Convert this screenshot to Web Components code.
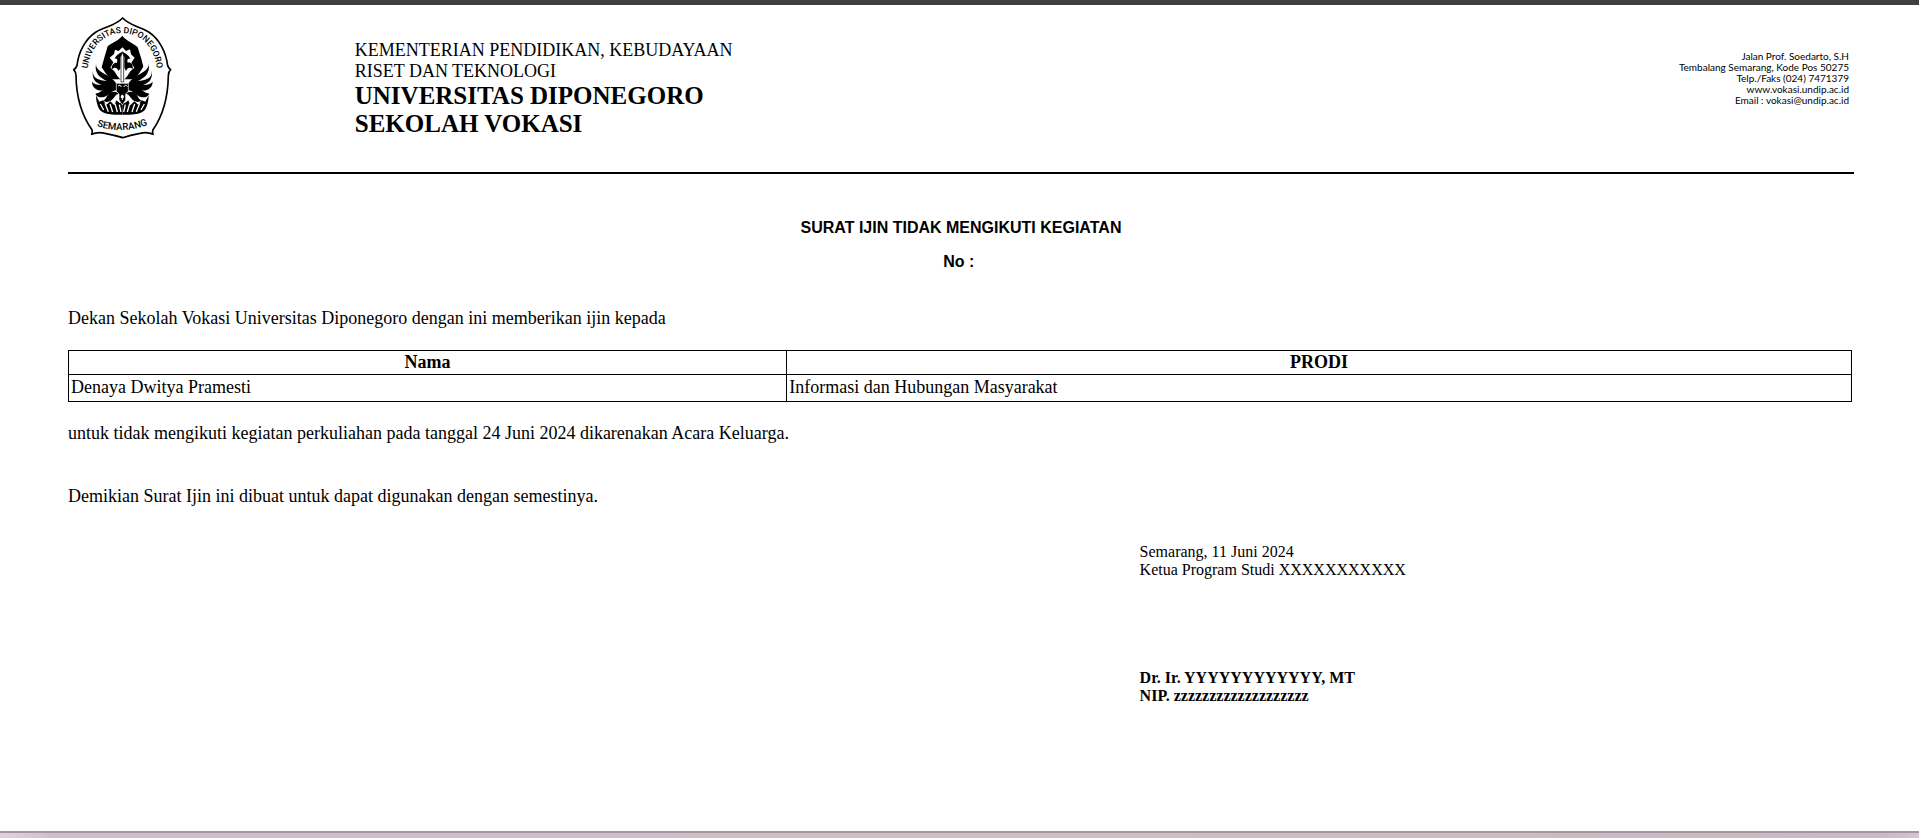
<!DOCTYPE html>
<html lang="id">
<head>
<meta charset="utf-8">
<title>Surat Ijin Tidak Mengikuti Kegiatan</title>
<style>
  body { margin: 0; background: #fff; color: #000; font-family: "Liberation Serif", "Times New Roman", serif; }
</style>
</head>
<body>
<letter-page>
  <letter-head slot="head">
    <undip-logo slot="logo"></undip-logo>
    <span slot="ministry">KEMENTERIAN PENDIDIKAN, KEBUDAYAAN<br>RISET DAN TEKNOLOGI</span>
    <span slot="school">UNIVERSITAS DIPONEGORO<br>SEKOLAH VOKASI</span>
    <span slot="address">Jalan Prof. Soedarto, S.H<br>Tembalang Semarang, Kode Pos 50275<br>Telp./Faks (024) 7471379<br>www.vokasi.undip.ac.id<br>Email : vokasi@undip.ac.id</span>
  </letter-head>
  <letter-title>
    <span slot="title">SURAT IJIN TIDAK MENGIKUTI KEGIATAN</span>
    <span slot="number">No :&nbsp;</span>
  </letter-title>
  <letter-text>Dekan Sekolah Vokasi Universitas Diponegoro dengan ini memberikan ijin kepada</letter-text>
  <student-table name="Denaya Dwitya Pramesti" program="Informasi dan Hubungan Masyarakat"></student-table>
  <letter-text>untuk tidak mengikuti kegiatan perkuliahan pada tanggal 24 Juni 2024 dikarenakan Acara Keluarga.</letter-text>
  <letter-text class="closing">Demikian Surat Ijin ini dibuat untuk dapat digunakan dengan semestinya.</letter-text>
  <letter-signature>
    <span slot="place">Semarang, 11 Juni 2024<br>Ketua Program Studi XXXXXXXXXXX</span>
    <span slot="signer">Dr. Ir. YYYYYYYYYYYY, MT<br>NIP. zzzzzzzzzzzzzzzzzzz</span>
  </letter-signature>
</letter-page>

<script>
function define(name, html, setup) {
  const template = document.createElement('template');
  template.innerHTML = html;
  customElements.define(name, class extends HTMLElement {
    constructor() {
      super();
      this.attachShadow({ mode: 'open' }).append(template.content.cloneNode(true));
    }
    connectedCallback() { if (setup) setup(this, this.shadowRoot); }
  });
}

define('letter-page', `
  <style>
    :host { display: flex; flex-direction: column; min-height: 100vh; box-sizing: border-box; border-top: 5px solid #3f3f3f; }
    main { flex: 1; padding: 8px 65px 24px 68px; }
    .edge { height: 5px; border-top: 2px solid #a2979c; background: linear-gradient(90deg, #e6cfe6, #d2bccb 56px, #d4bdc8 50%, #cdb7c4 calc(100% - 40px), #d8c1dc); }
  </style>
  <main><slot name="head"></slot><slot></slot></main>
  <div class="edge"></div>`);

define('letter-head', `
  <style>
    :host { display: block; }
    header { display: grid; grid-template-columns: 16% 1fr auto; height: 159px; border-bottom: 2px solid #000; }
    .name { padding: 27px 0 0 1px; font-size: 18px; line-height: 21px; }
    .name b { display: block; font-size: 25px; line-height: 28px; }
    address { padding: 38px 5px 0 0; font: 10px/11px Lato, sans-serif; text-align: right; }
  </style>
  <header>
    <slot name="logo"></slot>
    <div class="name"><slot name="ministry"></slot><b><slot name="school"></slot></b></div>
    <address><slot name="address"></slot></address>
  </header>`);

define('undip-logo', `
  <style>
    :host { display: block; padding: 3px 0 0 4px; }
    svg { display: block; width: 100px; height: 124px; }
    text { font: 500 26px Roboto, "Liberation Sans", sans-serif; }
    .city { font-size: 29px; }
  </style>
  <svg viewBox="36 50 300 372" role="img" aria-label="Universitas Diponegoro">
    <path d="M188 56C165 80 135 82 108 98C76 119 55 158 51 199Q48 207 41 211Q47 217 48 229C49 290 65 348 96 391Q98 398 95 405Q112 397 135 402Q165 408 188 415Q210 407 240 402Q262 397 279 405Q276 398 279 391C309 348 324 290 325 229Q325 217 332 211Q326 207 323 199C318 158 298 119 266 98C240 82 211 80 188 56Z" fill="#fff" stroke="#000" stroke-width="5" stroke-linejoin="round"/>
    <path id="arc-top" d="M80 236C84 150 122 103 187 101C252 103 290 150 294 236" fill="none"/>
    <path id="arc-low" d="M92 373Q187 413 281 369" fill="none"/>
    <text><textPath href="#arc-top" startOffset="50%" text-anchor="middle">UNIVERSITAS DIPONEGORO</textPath></text>
    <text class="city"><textPath href="#arc-low" startOffset="50%" text-anchor="middle">SEMARANG</textPath></text>
    <path d="M187 109C175 125 156 129 143 141L132 178L125 204L137 222L151 240H225L238 221L250 202L244 178L233 144C220 130 200 126 187 109Z"/>
    <path d="M165 151L176 155L187 144L198 155L210 150L213 165L224 175L214 190L223 205L211 216L202 230L187 247L172 230L163 216L151 205L160 189L149 175L162 164Z" fill="#fff"/>
    <path d="M164 178C171 163 181 161 187 157C194 161 207 166 211 179C204 176 200 180 203 190C214 188 220 196 218 209C210 202 202 205 198 215L193 205V172H181V207L176 215C170 203 163 203 155 211C154 195 162 189 171 190C174 180 170 175 164 178Z"/>
    <path d="M187 157L191 171V248H183V171Z" fill="#fff" stroke="#000" stroke-width="2"/>
    <g id="wing">
      <path d="M110 188C103 204 117 214 134 224C152 234 166 243 174 262C157 252 137 246 122 234C107 221 104 205 110 188Z"/>
      <path d="M99 214C96 237 118 243 141 245C157 247 168 253 174 265C152 261 130 262 114 252C100 243 96 229 99 214Z"/>
      <path d="M96 247C106 260 126 256 143 255C158 254 167 259 174 269C151 267 130 279 111 271C101 266 96 257 96 247Z"/>
      <path d="M106 283C121 283 130 267 147 264C158 262 168 265 174 273C156 270 149 288 132 293C120 296 110 292 106 283Z"/>
      <path d="M130 303C141 300 140 284 153 279C163 275 170 277 177 284C166 283 162 300 149 306C140 309 134 308 130 303Z"/>
      <path d="M108 288L118 307L129 303L139 316L151 306L163 318L169 303L180 312L187 305V346C157 346 130 345 119 331C112 320 108 306 108 288Z"/>
      <path d="M121 314L131 332M135 312L145 337M150 314L158 338M165 313L172 338M178 316L183 338" fill="none" stroke="#fff" stroke-width="4"/>
    </g>
    <use href="#wing" transform="translate(374 0) scale(-1 1)"/>
    <path d="M169 252H205V276L197 284V302L187 317L177 302V284L169 276Z" stroke="#fff" stroke-width="2"/>
    <path d="M174 260Q181 253 184 263M191 263Q197 253 202 262M187 286V302" fill="none" stroke="#fff" stroke-width="3"/>
    <circle cx="187" cy="292" r="5" fill="#fff"/>
  </svg>`);

define('letter-title', `
  <style>
    :host { display: block; padding: 37px 0 8px; text-align: center; font: bold 16px/34px "Liberation Sans", Arial, sans-serif; }
    h1, p { margin: 0; font: inherit; }
  </style>
  <h1><slot name="title"></slot></h1>
  <p><slot name="number"></slot></p>`);

define('letter-text', `
  <style>
    :host { display: block; margin-top: 21px; font-size: 18px; line-height: 21px; }
    :host(.closing) { margin-top: 42px; }
    p { margin: 0; }
  </style>
  <p><slot></slot></p>`);

define('student-table', `
  <style>
    :host { display: block; margin: 21px 2px 0 0; }
    table { width: 100%; border-collapse: collapse; table-layout: fixed; font-size: 18px; line-height: 21px; }
    th, td { border: 1px solid #000; padding: 1px 2px; }
    td { text-align: left; padding: 2px 2px 3px; }
    th:first-child { width: 40%; }
  </style>
  <table>
    <thead><tr><th scope="col">Nama</th><th scope="col">PRODI</th></tr></thead>
    <tbody><tr><td class="name"></td><td class="program"></td></tr></tbody>
  </table>`, (host, root) => {
  root.querySelector('.name').textContent = host.getAttribute('name');
  root.querySelector('.program').textContent = host.getAttribute('program');
});

define('letter-signature', `
  <style>
    :host { display: block; margin: 36px 0 0 60%; font-size: 16px; line-height: 18px; }
    p { margin: 0; }
    .signer { margin-top: 90px; font-weight: bold; }
  </style>
  <p><slot name="place"></slot></p>
  <p class="signer"><slot name="signer"></slot></p>`);
</script>
</body>
</html>
